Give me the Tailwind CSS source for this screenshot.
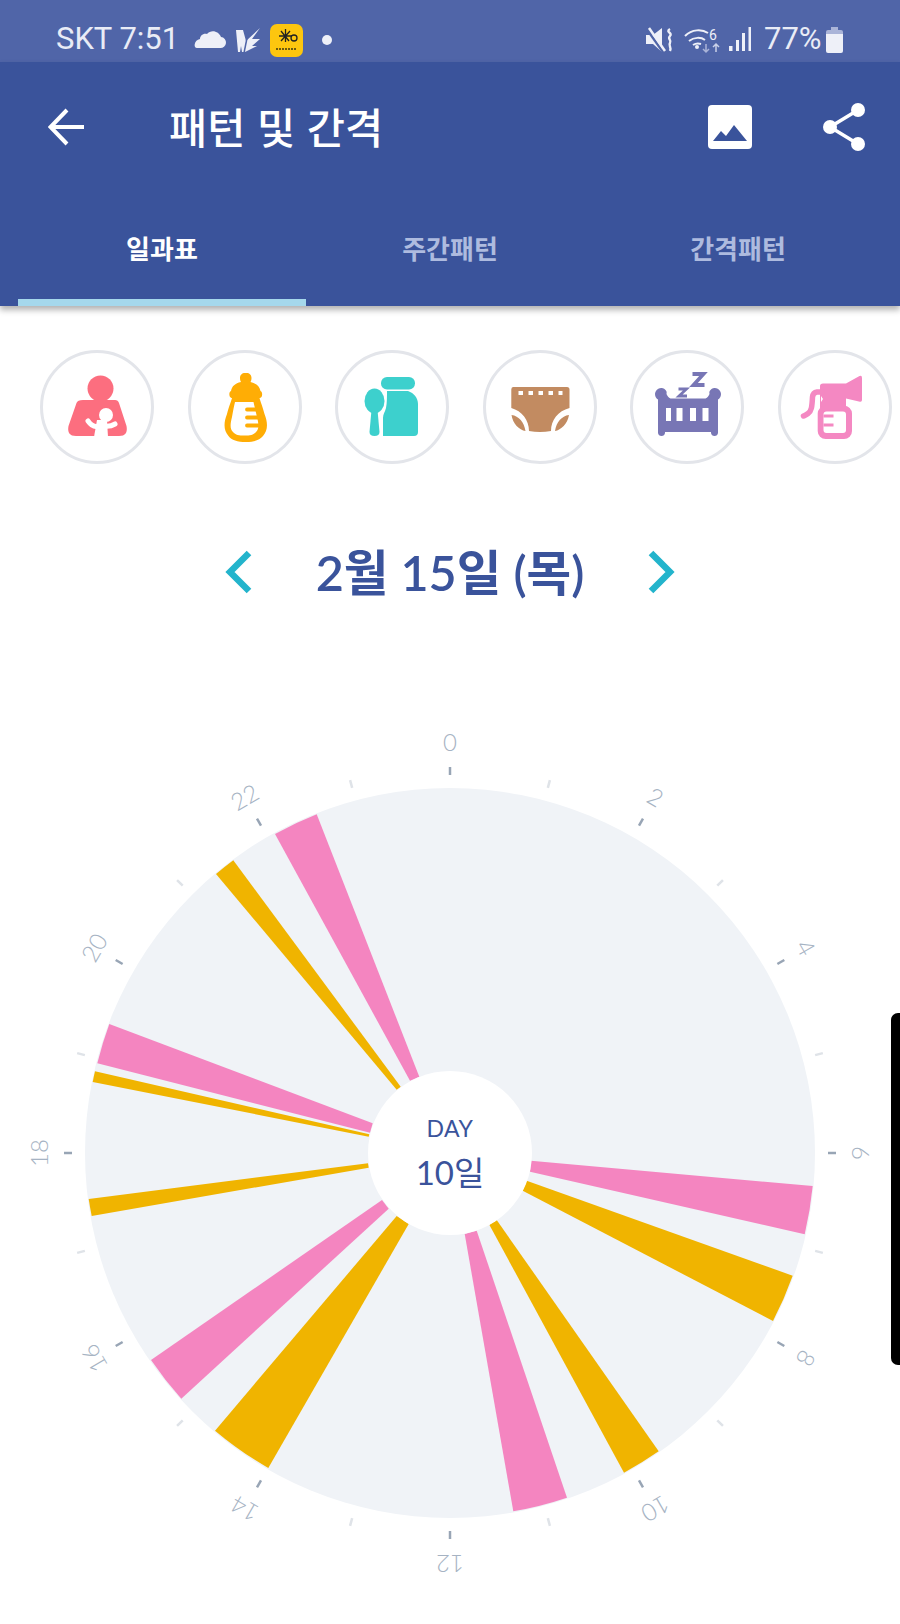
<!DOCTYPE html>
<html lang="ko">
<head>
<meta charset="utf-8">
<title>패턴 및 간격</title>
<script src="https://cdn.jsdelivr.net/npm/@tailwindcss/browser@4"></script>
</head>
<body class="bg-white">
<div class="relative w-[900px] h-[1624px] overflow-hidden bg-white flex flex-col font-['Noto_Sans_CJK_KR',sans-serif]">

  <!-- status bar -->
  <div class="h-[62px] bg-[#5065a8] shrink-0 relative flex items-center justify-between pl-[56px] pr-[56px] text-[#e9ecf6] font-['Roboto',sans-serif] text-[31px]">
    <div class="flex items-center h-full">
      <span class="w-[133px] whitespace-nowrap pt-[17px]">SKT 7:51</span>
      <svg width="144" height="62" viewBox="189 0 144 62" class="block">
        <path d="M197 48h23a5.500 5.500 0 0 0 1-11c-2-6-10-8-14-3-4-1-7 2-7 5-6 1-7 9-3 9z" fill="#eef0f8"/>
        <path d="M236 30h7l3 11 14-13-8 11h8l-8 7h5l-12 6-3 0-1-6-1 6h-2z" fill="#eef0f8"/>
        <path d="M248 33l-2 10-2 10" stroke="#5065a8" stroke-width="1.500" fill="none"/>
        <rect x="270" y="24" width="33" height="33" rx="7" fill="#fdc60f"/>
        <path d="M281 31l8 10M290 31l-9 10M285.500 29v13M279 36h13" stroke="#222" stroke-width="1.300"/>
        <circle cx="294" cy="38" r="3" fill="none" stroke="#222" stroke-width="1.300"/>
        <path d="M276 49h21" stroke="#6b5a10" stroke-width="2" stroke-dasharray="2 1"/>
        <circle cx="327" cy="40" r="5" fill="#eef0f8"/>
      </svg>
    </div>
    <div class="flex items-center h-full">
      <svg width="109" height="62" viewBox="645 0 109 62" class="block">
        <path d="M647 35h7l9-7v24l-9-8h-7z" fill="#eef0f8"/>
        <path d="M647 28l17 24" stroke="#5065a8" stroke-width="2.500"/>
        <path d="M650 28l16 23" stroke="#eef0f8" stroke-width="2.500"/>
        <path d="M671 29c-5 3 3 4 0 7s2 4 0 7 2 4 0 8" fill="none" stroke="#eef0f8" stroke-width="2.400"/>
        <path d="M686 36c7-7 17-7 23-3M690 41c5-4 12-4 16-1M694 45c3-2 5-2 8-1" fill="none" stroke="#eef0f8" stroke-width="2"/>
        <circle cx="698" cy="47" r="2" fill="#eef0f8"/>
        <text x="710" y="40" font-size="14" fill="#eef0f8" font-family="Roboto">6</text>
        <path d="M707 44v8m-3-3l3 3 3-3" fill="none" stroke="#aab4d8" stroke-width="1.500"/>
        <path d="M717 52v-8m-3 3l3-3 3 3" fill="none" stroke="#c9d0e8" stroke-width="1.500"/>
        <rect x="730" y="46" width="3.500" height="5" fill="#eef0f8"/>
        <rect x="737" y="40" width="3" height="11" fill="#eef0f8"/>
        <rect x="743" y="33" width="3" height="18" fill="#eef0f8"/>
        <rect x="749.500" y="27" width="2.500" height="24" fill="#eef0f8"/>
      </svg>
      <span class="ml-[11px] w-[60px] whitespace-nowrap text-[31px] pt-[17px]">77%</span>
      <svg width="19" height="28" viewBox="0 0 19 28" class="block ml-[1px] mt-[18px]">
        <path d="M6 1h7v3h3a2 2 0 0 1 2 2v5H1V6a2 2 0 0 1 2-2h3z" fill="#aab4d8"/>
        <path d="M1 8h17v17a2 2 0 0 1-2 2H3a2 2 0 0 1-2-2z" fill="#eef0f8"/>
      </svg>
    </div>
  </div>

  <!-- app header -->
  <header class="h-[244px] shrink-0 bg-[#3a539b] flex flex-col relative z-10 shadow-[0_4px_6px_rgba(0,0,0,0.3)]">
    <div class="h-[130px] shrink-0 relative flex items-center pl-[48px] pr-[34px]">
      <svg width="38" height="38" viewBox="0 0 38 38" class="block shrink-0">
        <path d="M36 19H3M19 2L2.500 19 19 36" fill="none" stroke="#fff" stroke-width="4"/>
      </svg>
      <h1 class="ml-[83px] text-white text-[41.500px] font-medium leading-none whitespace-nowrap">패턴 및 간격</h1>
      <div class="ml-auto flex items-center gap-[70px] pr-[0px]">
        <svg width="44" height="44" viewBox="0 0 44 44" class="block">
          <rect x="0" y="0" width="44" height="44" rx="4" fill="#fff"/>
          <path d="M5 36l8-10 5 5 8-11 13 16z" fill="#3a539b"/>
        </svg>
        <svg width="44" height="48" viewBox="0 0 44 48" class="block">
          <path d="M36 7L8 24l28 17" fill="none" stroke="#fff" stroke-width="3.500"/>
          <circle cx="36" cy="7" r="7" fill="#fff"/>
          <circle cx="8" cy="24" r="7" fill="#fff"/>
          <circle cx="36" cy="41" r="7" fill="#fff"/>
        </svg>
      </div>
    </div>
    <nav class="flex-1 flex pl-[18px] pr-[18px] text-[26px] font-bold">
      <div class="flex-1 flex items-center justify-center border-b-[7px] border-[#a5d8ec] text-white pt-[3px]">일과표</div>
      <div class="flex-1 flex items-center justify-center border-b-[7px] border-transparent text-[#aebbdf] pt-[3px]">주간패턴</div>
      <div class="flex-1 flex items-center justify-center border-b-[7px] border-transparent text-[#aebbdf] pt-[3px]">간격패턴</div>
    </nav>
  </header>

  <!-- category icons -->
  <div class="shrink-0 flex gap-[33.500px] pl-[40px] pt-[44px]">
    <svg width="114" height="114" viewBox="0 0 114 114" class="block shrink-0">
      <circle cx="57" cy="57" r="55.500" fill="#fff" stroke="#e3e5ea" stroke-width="3"/>
      <circle cx="60.500" cy="38.500" r="13" fill="#fc6e7f"/>
      <path d="M43 50h32q3 0 4 3l7.500 23q2 10-7.500 10H36q-9.500 0-7.500-10l8-23q1-3 6.500-3z" fill="#fc6e7f"/>
      <circle cx="66" cy="65" r="7" fill="#fff"/>
      <path d="M48 71q5 7 10 5h6q6 1 11-2" fill="none" stroke="#fff" stroke-width="5" stroke-linecap="round"/>
      <path d="M57 70h10l1 17H54z" fill="#fff"/>
    </svg>
    <svg width="114" height="114" viewBox="0 0 114 114" class="block shrink-0">
      <circle cx="57" cy="57" r="55.500" fill="#fff" stroke="#e3e5ea" stroke-width="3"/>
      <path d="M57 23c-3 0-5 2-5 5 0 2 .500 3 1 4-6 1.500-9 4-10 9-2 1-2 4-1 6 1 1 2 1 2 1-1 4-3 8-5 16-3.500 9-3.500 16 1.500 22 3 4 9 6 17.500 6s13.500-2 17-6c5-6 5-13 1.500-22-2-8-4-12-5-16 0 0 1 0 2-1 1-2 1-5-1-6-1-5-4-7.500-10-9 .500-1 1-2 1-4 0-3-2-5-5-5z" fill="#ffad05"/>
      <path d="M47.500 52h18c1 4 2 9 3.500 15 2 8 2 12-1 15-2.500 3-6 3.500-11.500 3.500s-9-.500-11.500-3.500c-3-3-3-7-1-15 1-6 2-11 3-15z" fill="#fff"/>
      <path d="M59 59.500h9M59 67.500h12M59 75.500h12" fill="none" stroke="#ffad05" stroke-width="3.800" stroke-linecap="round"/>
    </svg>
    <svg width="114" height="114" viewBox="0 0 114 114" class="block shrink-0">
      <circle cx="57" cy="57" r="55.500" fill="#fff" stroke="#e3e5ea" stroke-width="3"/>
      <rect x="46" y="27" width="34" height="12.500" rx="6" fill="#3dd0cd"/>
      <path d="M52 41h21c6 2 10 7 10 13v28q0 4-4 4H48V68c0-4 2-6 3-10 1-5 1-12 1-17z" fill="#3dd0cd"/>
      <ellipse cx="39.500" cy="51" rx="10" ry="12.500" fill="#3dd0cd"/>
      <path d="M36.500 60h6l2 22q0 4-5 4t-5-4z" fill="#3dd0cd"/>
    </svg>
    <svg width="114" height="114" viewBox="0 0 114 114" class="block shrink-0">
      <circle cx="57" cy="57" r="55.500" fill="#fff" stroke="#e3e5ea" stroke-width="3"/>
      <path d="M30 37h54q2.500 0 2.500 2.500V58C75 61 68 70 68 81q-11 2-22 0C46 70 39 61 28.300 58V39.500Q28.300 37 30 37z" fill="#c28b61"/>
      <path d="M28.500 65C36 66 41 72 42.500 81 36 80 30 74 28.500 65zM86 65C78.500 66 73.500 72 72 81 78 80 84.500 74 86 65z" fill="#c28b61"/>
      <path d="M35.500 43h44" stroke="#fff" stroke-width="4" stroke-dasharray="4.500 5.500" fill="none"/>
    </svg>
    <svg width="114" height="114" viewBox="0 0 114 114" class="block shrink-0">
      <circle cx="57" cy="57" r="55.500" fill="#fff" stroke="#e3e5ea" stroke-width="3"/>
      <path d="M25 44a6.200 6.200 0 0 1 9.500-5c2 1.500 2.500 3 2 5 1 2 2 4 4 4.500h35c2-.500 3-2.500 4-4.500-.500-2 0-3.500 2-5a6.200 6.200 0 0 1 9.500 5c0 3-1.500 4.500-3 5.500V83q-.500 3-3.500 3T81 83v-1H35v1q-.500 3-3.500 3T28 83V49.500C26.500 48.500 25 47 25 44z" fill="#7876b5"/>
      <path d="M36 58h5v13h-5zM46.500 58h6v13h-6zM60 58h6v13h-6zM72.500 58h6v13h-6z" fill="#fff"/>
      <path d="M62.500 24h11l-10 11h11" fill="none" stroke="#7876b5" stroke-width="3.800"/>
      <path d="M48.500 39h8l-7.500 7h8" fill="none" stroke="#7876b5" stroke-width="2.800"/>
    </svg>
    <svg width="114" height="114" viewBox="0 0 114 114" class="block shrink-0">
      <circle cx="57" cy="57" r="55.500" fill="#fff" stroke="#e3e5ea" stroke-width="3"/>
      <path d="M45 33.500h23L81.500 26q2.500-1 2.500 2v22q0 2-2 1.700L68 48.500V58H42V36q0-2.500 3-2.500z" fill="#f488c2"/>
      <path d="M44 42h-5q-4 .500-4.500 5c-.500 10-1 14-4.500 16.500-2 1.500-3.500 2-4.500 2.500" fill="none" stroke="#f488c2" stroke-width="5.500" stroke-linecap="round"/>
      <path d="M43 46l2 3-2 3z" fill="#fff"/>
      <rect x="39.700" y="55.700" width="34.300" height="33.300" rx="8" fill="#f488c2"/>
      <rect x="45.500" y="61.500" width="22.500" height="21.500" rx="3" fill="#fff"/>
      <path d="M45.500 66h10M45.500 75h10" stroke="#f488c2" stroke-width="3"/>
    </svg>
  </div>

  <!-- date -->
  <div class="shrink-0 mt-[78px] h-[60px] flex items-center justify-center relative">
    <svg width="30" height="44" viewBox="0 0 30 44" class="block shrink-0">
      <path d="M25 3L6 22l19 19" fill="none" stroke="#23b4cc" stroke-width="6.500"/>
    </svg>
    <h2 class="mx-[60px] w-[272px] text-center whitespace-nowrap text-[#3a539b] text-[48.500px] font-semibold leading-none font-['Lato','Noto_Sans_CJK_KR',sans-serif]">2월 15일 (목)</h2>
    <svg width="30" height="44" viewBox="0 0 30 44" class="block shrink-0">
      <path d="M5 3l19 19L5 41" fill="none" stroke="#23b4cc" stroke-width="6.500"/>
    </svg>
  </div>

  <!-- 24h chart -->
  <svg width="900" height="1022" viewBox="0 700 900 924" class="block shrink-0 mt-[98px] h-[924px] font-['Lato','Noto_Sans_CJK_KR',sans-serif]">
    <circle cx="450" cy="1153" r="365" fill="#f0f3f7"/>

    <g fill="#f485c0">
      <path d="M531 1160.700L812.700 1186A365 365 0 0 1 804.700 1234.300L530 1171.700Z"/>
      <path d="M476.700 1230.700L567 1497.700A365 365 0 0 1 513.300 1511.300L464.700 1234Z"/>
      <path d="M388.700 1208.700L181.300 1398.700A365 365 0 0 1 151 1360L382 1200Z"/>
      <path d="M370 1132.700L97.300 1063.300A365 365 0 0 1 109.300 1024L372.700 1123.300Z"/>
      <path d="M410 1080.700L275 834A365 365 0 0 1 316.700 814.300L419.300 1076.700Z"/>
    </g>
    <g fill="#f0b400">
      <path d="M526.700 1180.700L792.700 1275.700A365 365 0 0 1 773 1321L522.700 1190.700Z"/>
      <path d="M496.700 1220L658.700 1451.300A365 365 0 0 1 624 1472.700L489.300 1224.700Z"/>
      <path d="M408.700 1224L268.300 1468A365 365 0 0 1 215 1430.700L396.700 1216Z"/>
      <path d="M368.700 1167.700L91.700 1216A365 365 0 0 1 88.700 1199L368 1163.300Z"/>
      <path d="M368.700 1136.700L92.700 1082A365 365 0 0 1 95 1071.300L369.300 1134.300Z"/>
      <path d="M396.700 1089.700L216 874A365 365 0 0 1 233.300 860.300L400.700 1086.700Z"/>
    </g>

    <circle cx="450" cy="1153" r="82" fill="#fff"/>
    <text x="450" y="1137" text-anchor="middle" font-size="23" fill="#3a539b" letter-spacing="0.500">DAY</text>
    <text x="450" y="1185" text-anchor="middle" font-size="33" fill="#3a539b">10일</text>

    <!-- major ticks -->
    <g stroke="#98a5b5" stroke-width="2.500">
      <path d="M450 767v8" transform="rotate(0 450 1153)"/>
      <path d="M450 767v8" transform="rotate(30 450 1153)"/>
      <path d="M450 767v8" transform="rotate(60 450 1153)"/>
      <path d="M450 767v8" transform="rotate(90 450 1153)"/>
      <path d="M450 767v8" transform="rotate(120 450 1153)"/>
      <path d="M450 767v8" transform="rotate(150 450 1153)"/>
      <path d="M450 767v8" transform="rotate(180 450 1153)"/>
      <path d="M450 767v8" transform="rotate(210 450 1153)"/>
      <path d="M450 767v8" transform="rotate(240 450 1153)"/>
      <path d="M450 767v8" transform="rotate(270 450 1153)"/>
      <path d="M450 767v8" transform="rotate(300 450 1153)"/>
      <path d="M450 767v8" transform="rotate(330 450 1153)"/>
    </g>
    <!-- minor ticks -->
    <g stroke="#dfe3e8" stroke-width="2.500">
      <path d="M450 767v8" transform="rotate(15 450 1153)"/>
      <path d="M450 767v8" transform="rotate(45 450 1153)"/>
      <path d="M450 767v8" transform="rotate(75 450 1153)"/>
      <path d="M450 767v8" transform="rotate(105 450 1153)"/>
      <path d="M450 767v8" transform="rotate(135 450 1153)"/>
      <path d="M450 767v8" transform="rotate(165 450 1153)"/>
      <path d="M450 767v8" transform="rotate(195 450 1153)"/>
      <path d="M450 767v8" transform="rotate(225 450 1153)"/>
      <path d="M450 767v8" transform="rotate(255 450 1153)"/>
      <path d="M450 767v8" transform="rotate(285 450 1153)"/>
      <path d="M450 767v8" transform="rotate(315 450 1153)"/>
      <path d="M450 767v8" transform="rotate(345 450 1153)"/>
    </g>
    <!-- hour labels -->
    <g fill="#a6b3c3" font-size="24" font-weight="300" text-anchor="middle">
      <text x="450" y="751" transform="rotate(0 450 1153)">0</text>
      <text x="450" y="751" transform="rotate(30 450 1153)">2</text>
      <text x="450" y="751" transform="rotate(60 450 1153)">4</text>
      <text x="450" y="751" transform="rotate(90 450 1153)">6</text>
      <text x="450" y="751" transform="rotate(120 450 1153)">8</text>
      <text x="450" y="751" transform="rotate(150 450 1153)">10</text>
      <text x="450" y="751" transform="rotate(180 450 1153)">12</text>
      <text x="450" y="751" transform="rotate(210 450 1153)">14</text>
      <text x="450" y="751" transform="rotate(240 450 1153)">16</text>
      <text x="450" y="751" transform="rotate(270 450 1153)">18</text>
      <text x="450" y="751" transform="rotate(300 450 1153)">20</text>
      <text x="450" y="751" transform="rotate(330 450 1153)">22</text>
    </g>
  </svg>

  <!-- edge panel handle overlay -->
  <div class="absolute left-[891px] top-[1013px] w-[9px] h-[352px] bg-black rounded-l-[7px]"></div>
</div>
</body>
</html>
